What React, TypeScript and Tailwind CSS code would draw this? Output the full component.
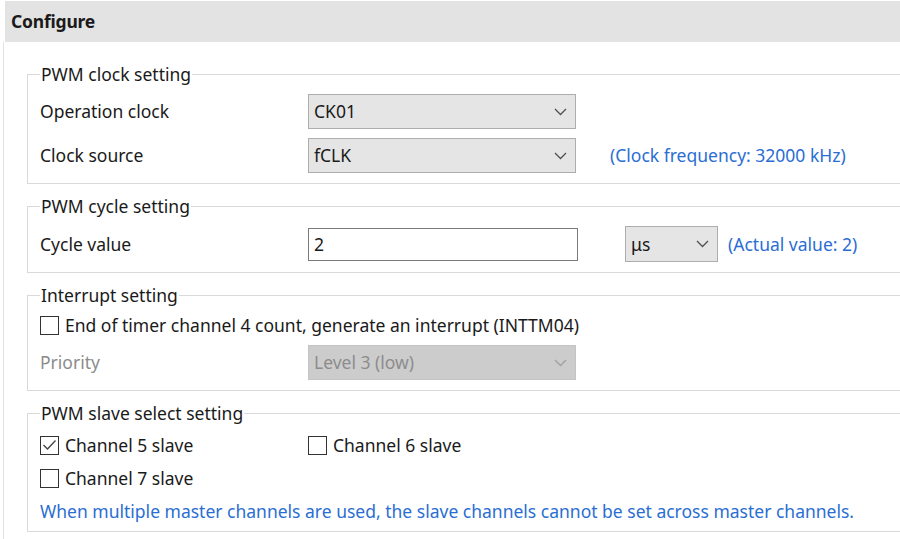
import React from 'react';

const Chevron: React.FC<{ color?: string }> = ({ color = '#505050' }) => (
  <svg width="13" height="8" viewBox="0 0 13 8" fill="none">
    <path d="M1 1l5.5 5.5L12 1" stroke={color} strokeWidth="1.3" />
  </svg>
);

const Select: React.FC<{ value: string; width: string; disabled?: boolean }> = ({ value, width, disabled }) => (
  <div
    className={`flex items-center justify-between h-[35px] pl-[5px] pr-[8px] border ${width} ${
      disabled ? 'bg-[#cccccc] border-[#c4c4c4] text-[#8c8c8c]' : 'bg-[#e5e5e5] border-[#adadad] text-[#1a1a1a]'
    }`}
  >
    <span>{value}</span>
    <Chevron color={disabled ? '#a0a0a0' : '#505050'} />
  </div>
);

const Checkbox: React.FC<{ checked?: boolean; label: string }> = ({ checked, label }) => (
  <div className="flex items-center gap-[6px]">
    <div className="w-[19px] h-[19px] border border-[#333333] bg-white flex items-center justify-center">
      {checked && (
        <svg width="15" height="12" viewBox="0 0 15 12" fill="none">
          <path d="M1.5 6l4 4L13.5 1.5" stroke="#444444" strokeWidth="1.3" />
        </svg>
      )}
    </div>
    <span>{label}</span>
  </div>
);

const Group: React.FC<{ title: string; className?: string; children: React.ReactNode }> = ({ title, className, children }) => (
  <fieldset className={`border border-[#d9d9d9] pl-[12px] mr-[-20px] ${className ?? ''}`}>
    <legend className="px-px leading-[22px]">{title}</legend>
    {children}
  </fieldset>
);

export default function App() {
  return (
    <div
      className="w-[900px] h-[539px] bg-white overflow-hidden text-[17.5px] text-[#1a1a1a]"
      style={{ fontFamily: '"Noto Sans", "Open Sans", sans-serif' }}
    >
      <div className="mt-px ml-[5px] h-[41px] bg-[#e3e3e3] flex items-center pl-[6px]">
        <span className="font-bold text-[17.5px] tracking-[-0.2px]">Configure</span>
      </div>
      <div className="ml-[3px] border-l border-[#e2e2e2] pl-[23px] pt-[21px] h-[497px] flex flex-col gap-[11px]">
        <Group title="PWM clock setting" className="pt-[9px] pb-[10px]">
          <div className="flex flex-col gap-[9px]">
            <div className="flex items-center">
              <span className="w-[268px]">Operation clock</span>
              <Select value="CK01" width="w-[268px]" />
            </div>
            <div className="flex items-center">
              <span className="w-[268px]">Clock source</span>
              <Select value="fCLK" width="w-[268px]" />
              <span className="ml-[34px] text-[#2a6ed3]">(Clock frequency: 32000 kHz)</span>
            </div>
          </div>
        </Group>
        <Group title="PWM cycle setting" className="pt-[9px] pb-[10px]">
          <div className="flex items-center h-[36px]">
            <span className="w-[268px]">Cycle value</span>
            <div className="w-[270px] h-[33px] border border-[#7a7a7a] flex items-center pl-[5px]">2</div>
            <div className="ml-[47px]">
              <div className="flex items-center justify-between w-[93px] h-[36px] pl-[5px] pr-[8px] border bg-[#e5e5e5] border-[#adadad]">
                <span>μs</span>
                <Chevron />
              </div>
            </div>
            <span className="ml-[10px] text-[#2a6ed3]">(Actual value: 2)</span>
          </div>
        </Group>
        <Group title="Interrupt setting" className="pt-[9px] pb-[10px]">
          <div className="flex flex-col gap-[10px]">
            <div className="h-[20px] flex items-center">
              <Checkbox label="End of timer channel 4 count, generate an interrupt (INTTM04)" />
            </div>
            <div className="flex items-center">
              <span className="w-[268px] text-[#8c8c8c]">Priority</span>
              <Select value="Level 3 (low)" width="w-[268px]" disabled />
            </div>
          </div>
        </Group>
        <Group title="PWM slave select setting" className="pt-[11px] pb-[10px]">
          <div className="flex flex-col gap-[13px]">
            <div className="flex items-center h-[20px]">
              <div className="w-[268px]">
                <Checkbox checked label="Channel 5 slave" />
              </div>
              <Checkbox label="Channel 6 slave" />
            </div>
            <div className="flex items-center h-[20px]">
              <Checkbox label="Channel 7 slave" />
            </div>
            <div className="text-[#2a6ed3] leading-[20px] whitespace-nowrap">
              When multiple master channels are used, the slave channels cannot be set across master channels.
            </div>
          </div>
        </Group>
      </div>
    </div>
  );
}
